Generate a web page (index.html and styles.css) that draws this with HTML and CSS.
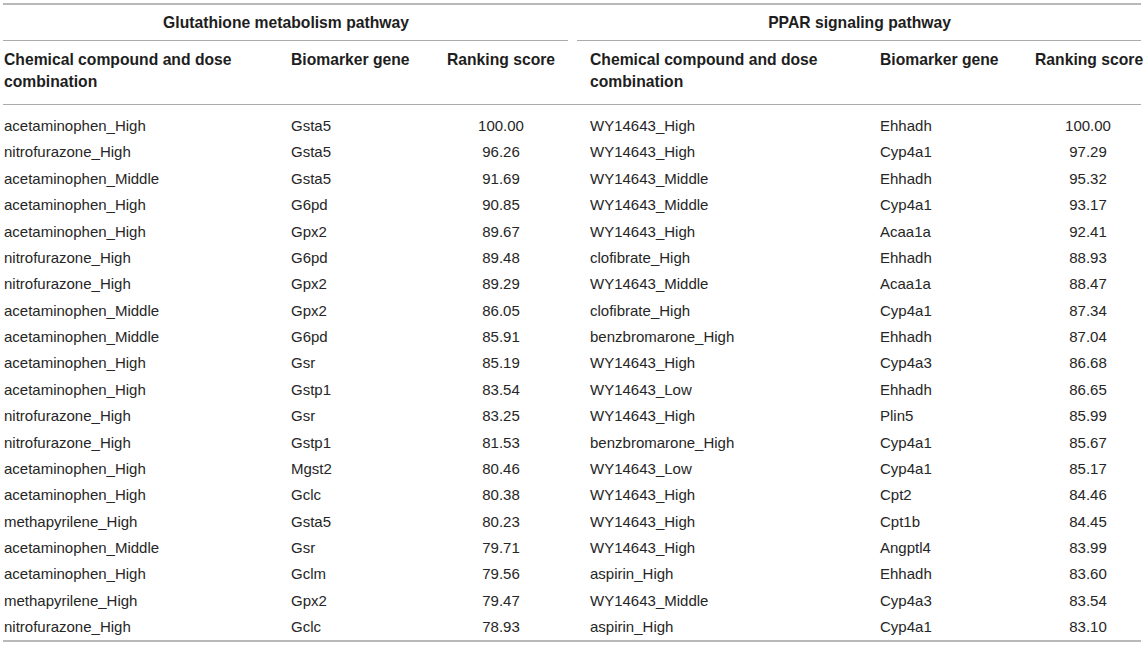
FILE: index.html
```html
<!doctype html>
<html>
    <head>
        <link rel="stylesheet" href="styles.css">
    </head>
    <body>
        <table class="ranking">
            <colgroup>
                <col class="w-compound">
                <col class="w-gene">
                <col class="w-score">
                <col class="w-gap">
                <col class="w-compound-r">
                <col class="w-gene-r">
                <col class="w-score-r">
            </colgroup>
            <thead>
                <tr class="group-row">
                    <th colspan="3" class="group">Glutathione metabolism pathway</th>
                    <th class="gap"></th>
                    <th colspan="3" class="group">PPAR signaling pathway</th>
                </tr>
                <tr class="head-row">
                    <th>Chemical compound and dose combination</th>
                    <th>Biomarker gene</th>
                    <th class="score">Ranking score</th>
                    <th class="gap"></th>
                    <th class="right-first">Chemical compound and dose combination</th>
                    <th class="right-gene">Biomarker gene</th>
                    <th class="score">Ranking score</th>
                </tr>
            </thead>
            <tbody>
                <tr><td>acetaminophen_High</td><td>Gsta5</td><td class="score">100.00</td><td class="gap"></td><td class="right-first">WY14643_High</td><td class="right-gene">Ehhadh</td><td class="score">100.00</td></tr>
                <tr><td>nitrofurazone_High</td><td>Gsta5</td><td class="score">96.26</td><td class="gap"></td><td class="right-first">WY14643_High</td><td class="right-gene">Cyp4a1</td><td class="score">97.29</td></tr>
                <tr><td>acetaminophen_Middle</td><td>Gsta5</td><td class="score">91.69</td><td class="gap"></td><td class="right-first">WY14643_Middle</td><td class="right-gene">Ehhadh</td><td class="score">95.32</td></tr>
                <tr><td>acetaminophen_High</td><td>G6pd</td><td class="score">90.85</td><td class="gap"></td><td class="right-first">WY14643_Middle</td><td class="right-gene">Cyp4a1</td><td class="score">93.17</td></tr>
                <tr><td>acetaminophen_High</td><td>Gpx2</td><td class="score">89.67</td><td class="gap"></td><td class="right-first">WY14643_High</td><td class="right-gene">Acaa1a</td><td class="score">92.41</td></tr>
                <tr><td>nitrofurazone_High</td><td>G6pd</td><td class="score">89.48</td><td class="gap"></td><td class="right-first">clofibrate_High</td><td class="right-gene">Ehhadh</td><td class="score">88.93</td></tr>
                <tr><td>nitrofurazone_High</td><td>Gpx2</td><td class="score">89.29</td><td class="gap"></td><td class="right-first">WY14643_Middle</td><td class="right-gene">Acaa1a</td><td class="score">88.47</td></tr>
                <tr><td>acetaminophen_Middle</td><td>Gpx2</td><td class="score">86.05</td><td class="gap"></td><td class="right-first">clofibrate_High</td><td class="right-gene">Cyp4a1</td><td class="score">87.34</td></tr>
                <tr><td>acetaminophen_Middle</td><td>G6pd</td><td class="score">85.91</td><td class="gap"></td><td class="right-first">benzbromarone_High</td><td class="right-gene">Ehhadh</td><td class="score">87.04</td></tr>
                <tr><td>acetaminophen_High</td><td>Gsr</td><td class="score">85.19</td><td class="gap"></td><td class="right-first">WY14643_High</td><td class="right-gene">Cyp4a3</td><td class="score">86.68</td></tr>
                <tr><td>acetaminophen_High</td><td>Gstp1</td><td class="score">83.54</td><td class="gap"></td><td class="right-first">WY14643_Low</td><td class="right-gene">Ehhadh</td><td class="score">86.65</td></tr>
                <tr><td>nitrofurazone_High</td><td>Gsr</td><td class="score">83.25</td><td class="gap"></td><td class="right-first">WY14643_High</td><td class="right-gene">Plin5</td><td class="score">85.99</td></tr>
                <tr><td>nitrofurazone_High</td><td>Gstp1</td><td class="score">81.53</td><td class="gap"></td><td class="right-first">benzbromarone_High</td><td class="right-gene">Cyp4a1</td><td class="score">85.67</td></tr>
                <tr><td>acetaminophen_High</td><td>Mgst2</td><td class="score">80.46</td><td class="gap"></td><td class="right-first">WY14643_Low</td><td class="right-gene">Cyp4a1</td><td class="score">85.17</td></tr>
                <tr><td>acetaminophen_High</td><td>Gclc</td><td class="score">80.38</td><td class="gap"></td><td class="right-first">WY14643_High</td><td class="right-gene">Cpt2</td><td class="score">84.46</td></tr>
                <tr><td>methapyrilene_High</td><td>Gsta5</td><td class="score">80.23</td><td class="gap"></td><td class="right-first">WY14643_High</td><td class="right-gene">Cpt1b</td><td class="score">84.45</td></tr>
                <tr><td>acetaminophen_Middle</td><td>Gsr</td><td class="score">79.71</td><td class="gap"></td><td class="right-first">WY14643_High</td><td class="right-gene">Angptl4</td><td class="score">83.99</td></tr>
                <tr><td>acetaminophen_High</td><td>Gclm</td><td class="score">79.56</td><td class="gap"></td><td class="right-first">aspirin_High</td><td class="right-gene">Ehhadh</td><td class="score">83.60</td></tr>
                <tr><td>methapyrilene_High</td><td>Gpx2</td><td class="score">79.47</td><td class="gap"></td><td class="right-first">WY14643_Middle</td><td class="right-gene">Cyp4a3</td><td class="score">83.54</td></tr>
                <tr><td>nitrofurazone_High</td><td>Gclc</td><td class="score">78.93</td><td class="gap"></td><td class="right-first">aspirin_High</td><td class="right-gene">Cyp4a1</td><td class="score">83.10</td></tr>
            </tbody>
        </table>
    </body>
</html>
```

FILE: styles.css
```css
html,
body {
    margin: 0;
    background: #fff;
}
body {
    padding-top: 3px;
    font-family: "Liberation Sans", Arial, sans-serif;
    font-size: 15px;
    color: #262626;
}
.ranking {
    margin-left: 3px;
    width: 1138px;
    table-layout: fixed;
    border-collapse: collapse;
    border-top: 2px solid #b9b9b9;
    border-bottom: 2px solid #b9b9b9;
}
.w-compound {
    width: 287px;
}
.w-gene {
    width: 144px;
}
.w-score {
    width: 134px;
}
.w-gap {
    width: 9px;
}
.w-compound-r {
    width: 299px;
}
.w-gene-r {
    width: 159px;
}
.w-score-r {
    width: 106px;
}
th,
td {
    padding: 0 0 0 1px;
    line-height: 22px;
    text-align: left;
    vertical-align: top;
}
th {
    font-weight: bold;
    font-size: 15.7px;
    color: #1e1e1e;
}
.group-row th {
    padding-top: 7px;
    padding-bottom: 6px;
}
.group {
    text-align: center;
    border-bottom: 1px solid #ababab;
}
.head-row th {
    padding-top: 8px;
    padding-bottom: 11px;
    border-bottom: 1px solid #ababab;
}
td {
    padding-top: 2.2px;
    padding-bottom: 2.2px;
}
tbody tr:first-child td {
    padding-top: 10px;
}
.score {
    text-align: center;
    padding-left: 0;
    white-space: nowrap;
}
.right-first {
    padding-left: 13px;
}
.right-gene {
    padding-left: 4px;
}
.gap {
    padding: 0;
}
```
